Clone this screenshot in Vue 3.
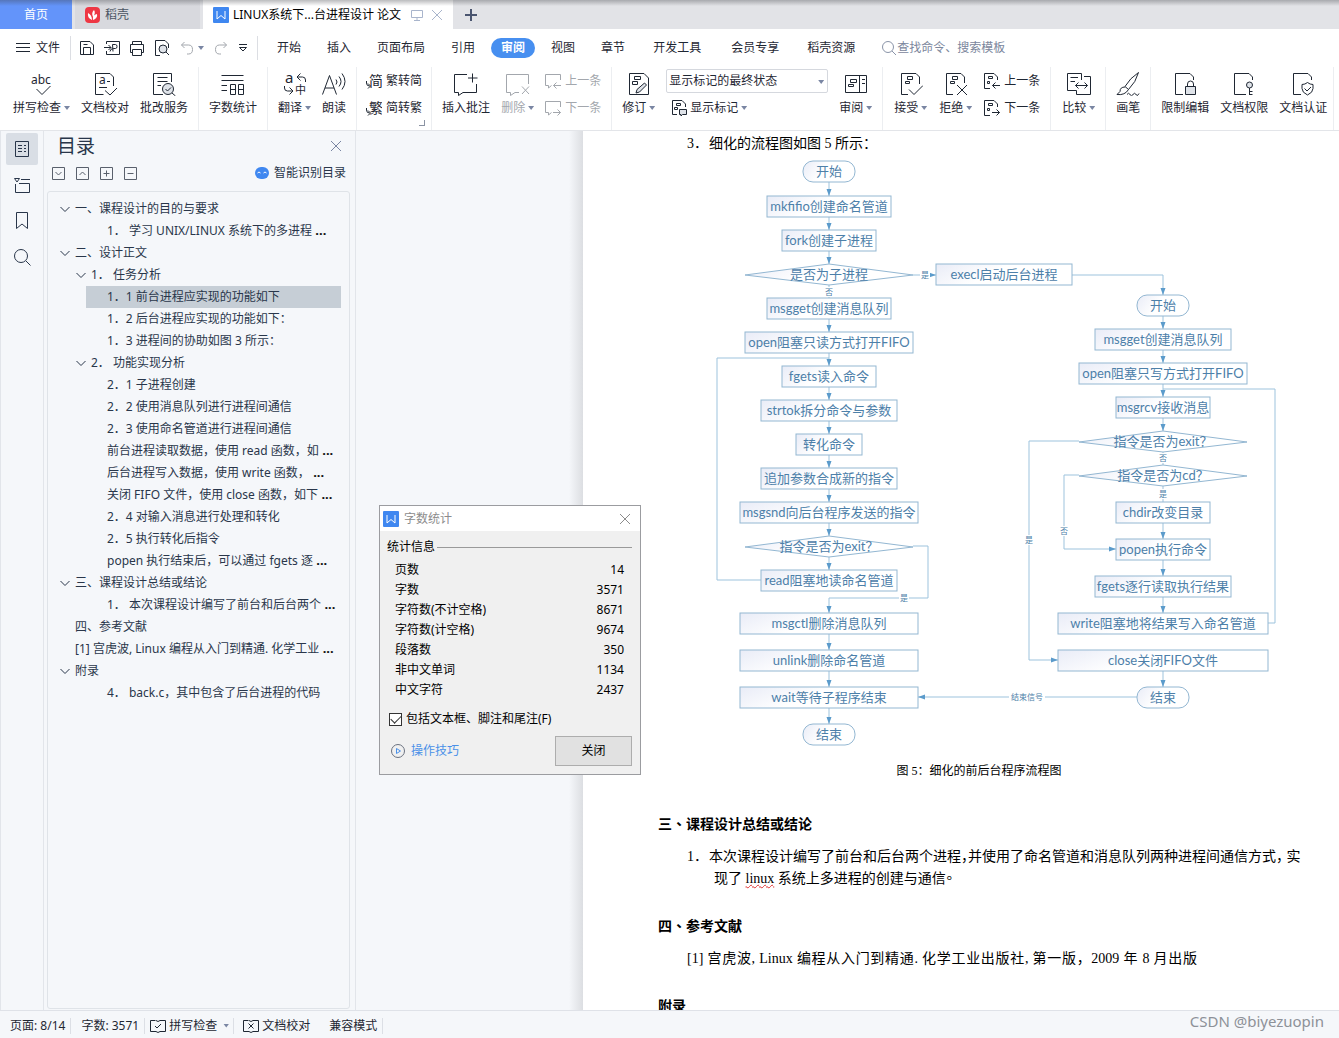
<script setup>
import { ref } from 'vue'

const menus = [
  { t: '开始' }, { t: '插入' }, { t: '页面布局' }, { t: '引用' },
  { t: '审阅', on: true }, { t: '视图' }, { t: '章节' },
  { t: '开发工具', wide: true }, { t: '会员专享', wide: true }, { t: '稻壳资源' },
]

const outline = [
  { l: 0, c: true, t: '一、课程设计的目的与要求' },
  { l: 2, t: '1． 学习 UNIX/LINUX 系统下的多进程', more: true },
  { l: 0, c: true, t: '二、设计正文' },
  { l: 1, c: true, t: '1． 任务分析' },
  { l: 2, t: '1．1 前台进程应实现的功能如下', on: true },
  { l: 2, t: '1．2 后台进程应实现的功能如下：' },
  { l: 2, t: '1．3 进程间的协助如图 3 所示：' },
  { l: 1, c: true, t: '2． 功能实现分析' },
  { l: 2, t: '2．1 子进程创建' },
  { l: 2, t: '2．2 使用消息队列进行进程间通信' },
  { l: 2, t: '2．3 使用命名管道进行进程间通信' },
  { l: 2, t: '前台进程读取数据，使用 read 函数，如', more: true },
  { l: 2, t: '后台进程写入数据，使用 write 函数，', more: true },
  { l: 2, t: '关闭 FIFO 文件，使用 close 函数，如下', more: true },
  { l: 2, t: '2．4 对输入消息进行处理和转化' },
  { l: 2, t: '2．5 执行转化后指令' },
  { l: 2, t: 'popen 执行结束后，可以通过 fgets 逐', more: true },
  { l: 0, c: true, t: '三、课程设计总结或结论' },
  { l: 2, t: '1． 本次课程设计编写了前台和后台两个', more: true },
  { l: 0, t: '四、参考文献' },
  { l: 0, t: '[1] 宫虎波, Linux 编程从入门到精通. 化学工业', more: true },
  { l: 0, c: true, t: '附录' },
  { l: 2, t: '4． back.c，其中包含了后台进程的代码' },
]

const stats = [
  ['页数', 14], ['字数', 3571], ['字符数(不计空格)', 8671], ['字符数(计空格)', 9674],
  ['段落数', 350], ['非中文单词', 1134], ['中文字符', 2437],
]
const includeNotes = ref(true)
const markup = ref('显示标记的最终状态')

// Flow chart nodes: [kind, centre x, top, width, text]; every node is 21 high
const nodes = [
  ['pill', 829, 161, 52, '开始'],
  ['box', 829, 196, 124, 'mkfifio创建命名管道'],
  ['box', 829, 230, 94, 'fork创建子进程'],
  ['rhomb', 829, 264, 168, '是否为子进程'],
  ['box', 829, 298, 124, 'msgget创建消息队列'],
  ['box', 829, 332, 168, 'open阻塞只读方式打开FIFO'],
  ['box', 829, 366, 94, 'fgets读入命令'],
  ['box', 829, 400, 136, 'strtok拆分命令与参数'],
  ['box', 829, 434, 66, '转化命令'],
  ['box', 829, 468, 136, '追加参数合成新的指令'],
  ['box', 829, 502, 178, 'msgsnd向后台程序发送的指令'],
  ['rhomb', 829, 536, 168, '指令是否为exit？'],
  ['box', 829, 570, 136, 'read阻塞地读命名管道'],
  ['box', 829, 613, 178, 'msgctl删除消息队列'],
  ['box', 829, 650, 178, 'unlink删除命名管道'],
  ['box', 829, 687, 178, 'wait等待子程序结束'],
  ['pill', 829, 724, 52, '结束'],
  ['box', 1004, 264, 136, 'execl启动后台进程'],
  ['pill', 1163, 295, 52, '开始'],
  ['box', 1163, 329, 136, 'msgget创建消息队列'],
  ['box', 1163, 363, 168, 'open阻塞只写方式打开FIFO'],
  ['box', 1163, 397, 94, 'msgrcv接收消息'],
  ['rhomb', 1163, 431, 168, '指令是否为exit？'],
  ['rhomb', 1163, 465, 168, '指令是否为cd？'],
  ['box', 1163, 502, 94, 'chdir改变目录'],
  ['box', 1163, 539, 94, 'popen执行命令'],
  ['box', 1163, 576, 136, 'fgets逐行读取执行结果'],
  ['box', 1163, 613, 210, 'write阻塞地将结果写入命名管道'],
  ['box', 1163, 650, 210, 'close关闭FIFO文件'],
  ['pill', 1163, 687, 52, '结束'],
].map(([kind, x, y, w, t]) => ({ kind, x, y, w, t }))

const arrows = [
  'M829 182V196', 'M829 217V230', 'M829 251V264', 'M829 319V332', 'M829 353V366', 'M829 387V400',
  'M829 421V434', 'M829 455V468', 'M829 489V502', 'M829 523V536', 'M829 557V570',
  'M913 546H928V598H829V613', 'M829 634V650', 'M829 671V687', 'M829 708V724',
  'M913 275H936', 'M1071 275H1163V295', 'M1163 316V329', 'M1163 350V363', 'M1163 384V397',
  'M1163 418V431', 'M1163 523V539', 'M1163 560V576', 'M1163 597V613', 'M1163 671V687',
  'M1079 475H1064V549H1116', 'M1079 441H1029V660H1058', 'M1137 697H918',
]
const lines = [
  'M829 285V298', 'M761 580H717V358H829', 'M1268 623H1275V389H1163', 'M1163 452V465', 'M1163 486V502',
]
const tags = [
  [925, 275, '是', 10], [829, 292, '否', 10], [904, 598, '是', 10], [1163, 458, '否', 10],
  [1163, 494, '是', 10], [1064, 531, '否', 10], [1029, 540, '是', 10], [1027, 697, '结束信号', 36],
].map(([x, y, t, w]) => ({ x, y, t, w }))
</script>

<template>
  <div class="app">
    <svg class="defs" width="0" height="0" aria-hidden="true">
      <symbol id="i-spell" viewBox="0 0 24 24"><text x="1" y="12" font-size="12">abc</text><path d="M6.500 17l5.500 5.500 8.500-8.500" /></symbol>
      <symbol id="i-proof" viewBox="0 0 24 24"><path d="M10.500 22.500H2.500V1.500H17L20.500 5V14M6 15.500H14M12 18.500l5 4.500 7-7M14 9.500h3" /><text x="6" y="12" font-size="12">a</text></symbol>
      <symbol id="i-fix" viewBox="0 0 24 24"><path d="M11 22.500H1.500V1.500H19.500V10M5.500 5.500H15.500M5.500 9.500H15.500M5.500 13.500H9" /><circle cx="16" cy="17" r="5.500" class="tint" /><path d="M20 21l3.500 3M13.500 17l2 2 3.500-3.500" /></symbol>
      <symbol id="i-count" viewBox="0 0 24 24"><path d="M.5 3.500H22.500M.5 8.500H22.500M.5 13.500H6M.5 18.500H6M9.500 12.500h5v10h-5zM9.500 17.500h5M17.500 12.500h5v10h-5zM17.500 17.500h5" /></symbol>
      <symbol id="i-trans" viewBox="0 0 24 24"><text x="2" y="11" font-size="15">a</text><text x="12" y="22" font-size="11">中</text><path d="M22.500 10V8q0-3-3-3H14M17.500 1.500L14 5l3.500 3.500M1.500 14v2q0 3 3 3H10M6.500 15.500l3.500 3.500-3.500 3.500" /></symbol>
      <symbol id="i-read" viewBox="0 0 24 24"><path d="M.5 22.500L7.500 3.500 14.500 22.500M3 16H12M14 7.500q2 2.500 0 5M17 4.500q4 5 0 10M20 1.500q6 8 0 16" /></symbol>
      <symbol id="i-simp" viewBox="0 0 16 16"><text x="3" y="13" font-size="14">简</text><path d="M.5 8v2q0 3 3 3M2 10.500L4.500 13 2 15.500" /></symbol>
      <symbol id="i-trad" viewBox="0 0 16 16"><text x="3" y="13" font-size="14">繁</text><path d="M.5 8v2q0 3 3 3M2 10.500L4.500 13 2 15.500" /></symbol>
      <symbol id="i-note" viewBox="0 0 24 24"><path d="M13 2.500H.5V20.500H4.500V23.500L9 20.500H22.500V12M18.500 1.500v9M14 6h9.500" /></symbol>
      <symbol id="i-del" viewBox="0 0 24 24"><path d="M22.500 12V2.500H.5V20.500H4.500V23.500L9 20.500H13M16 14.500l7 7.500M23 14.500l-7 7.500" /></symbol>
      <symbol id="i-cprev" viewBox="0 0 16 16"><path d="M15.500 7V1.500H.5V12.500H3.500V15L6.500 12.500M16 12.500H8.500M11.500 9.500l-3 3 3 3" /></symbol>
      <symbol id="i-cnext" viewBox="0 0 16 16"><path d="M15.500 7V1.500H.5V12.500H3.500V15L6.500 12.500M8 12.500H15.500M12.500 9.500l3 3-3 3" /></symbol>
      <symbol id="i-revise" viewBox="0 0 24 24"><path d="M2.500 1.500H17L21.500 6V22.500H2.500zM7.500 4.500h6v3h-6zM5.500 9.500h5v3h-5z" /><path d="M17.500 11l2 2-7 7-3.500 1 1-3.500z" class="tint" /></symbol>
      <symbol id="i-mark" viewBox="0 0 16 16"><path d="M6 14.500H1.500V.5H11L14.500 4V7M5.500 3.500h4v2h-4zM3.500 7.500h3v2h-3z" /><path d="M8.500 9.500h7v5h-4l-1.500 1.500V14.500H8.500z" class="tint" /></symbol>
      <symbol id="i-review" viewBox="0 0 24 24"><path d="M1.500 3.500H22.500V20.500H1.500zM15.500 3.500v17M18 7.500h3M18 11.500h3M6.500 7.500h6v3h-6zM4.500 12.500h5v2h-5z" /></symbol>
      <symbol id="i-accept" viewBox="0 0 24 24"><path d="M9 22.500H2.500V1.500H17L20.500 5V12M8.500 4.500h5v3h-5zM6.500 9.500h4v2h-4zM10 17.500l5 5 9-9" /></symbol>
      <symbol id="i-reject" viewBox="0 0 24 24"><path d="M9 22.500H2.500V1.500H17L20.500 5V11M8.500 4.500h5v3h-5zM6.500 9.500h4v2h-4zM13 13l10 10M23 13l-10 10" /></symbol>
      <symbol id="i-rprev" viewBox="0 0 16 16"><path d="M6 15.500H.5V.5H10L13.500 4V7M4.500 3.500h4v2h-4zM3.500 8.500h2v2h-2zM16 12.500H8.500M11.500 9.500l-3 3 3 3" /></symbol>
      <symbol id="i-rnext" viewBox="0 0 16 16"><path d="M6 15.500H.5V.5H10L13.500 4V7M4.500 3.500h4v2h-4zM3.500 8.500h2v2h-2zM8 12.500H15.500M12.500 9.500l3 3-3 3" /></symbol>
      <symbol id="i-compare" viewBox="0 0 24 24"><path d="M14.500 8V1.500H.5V18.500H9.500V22.500H23.500V4.500H17M3.500 5.500H11M3.500 9.500H8M8.500 13.500H20.500M11.500 10.500l-3 3 3 3M17.500 10.500l3 3-3 3" /></symbol>
      <symbol id="i-brush" viewBox="0 0 24 24"><path d="M22.500.5Q14 6 9 14.500l3.500 3Q20 10 22.500.5zM9 15q-5 0-5 4.500L1 22.500q8 1 11.500-5M11 22.500q1.500-2.500 3 0t3 0 3 0 3-1" /></symbol>
      <symbol id="i-lock" viewBox="0 0 24 24"><path d="M10 22.500H2.500V1.500H17L20.500 5V8M14.500 15v-3a3 3 0 0 1 6 0v3" /><path d="M12.500 14.500h10v8h-10z" class="tint" /></symbol>
      <symbol id="i-key" viewBox="0 0 24 24"><path d="M14 22.500H2.500V1.500H17L20.500 5V8M17.500 16v7M17.500 19.500h3M17.500 22.500h3" /><circle cx="17.500" cy="13" r="3" class="tint" /></symbol>
      <symbol id="i-cert" viewBox="0 0 24 24"><path d="M10 22.500H2.500V1.500H17L20.500 5V8M16.500 10.500q2.500 2 5.500 2v4q0 4-5.500 6.500Q11 20.500 11 16.500v-4q3 0 5.500-2zM13.500 16.500l2.500 2.500 4-4" /></symbol>
      <symbol id="i-save" viewBox="0 0 16 16"><path d="M1.500 1.500H11L14.500 5V14.500H1.500zM4.500 14.500V7.500H11.500V14.500M4.500 4.500h4" /></symbol>
      <symbol id="i-export" viewBox="0 0 16 16"><path d="M2.500 4V1.500H15.500V14.500H2.500V11M0 7.500H7M4.500 5L7 7.500 4.500 10M9 11.500L8.500 4.500h3q1.500 0 1.500 2t-1.500 2H10q-4 0-4 3" /></symbol>
      <symbol id="i-print" viewBox="0 0 16 16"><path d="M3.500 4.500V1.500H12.500V4.500M3.500 12.500H1.500V4.500H14.500V12.500H12.500M3.500 9.500H12.500V15.500H3.500z" /></symbol>
      <symbol id="i-preview" viewBox="0 0 16 16"><path d="M6 15.500H1.500V.5H11L14.500 4V8M12 12l3 3" /><circle cx="9" cy="9" r="4" class="tint" /></symbol>
      <symbol id="i-undo" viewBox="0 0 16 16"><path d="M5.500 2L2.500 5 5.500 8M2.500 5H9.500q4 0 4 4.500T9.500 14H8" /></symbol>
      <symbol id="i-redo" viewBox="0 0 16 16"><path d="M10.500 2L13.500 5 10.500 8M13.500 5H6.500q-4 0-4 4.500T6.500 14H8" /></symbol>
      <symbol id="i-find" viewBox="0 0 16 16"><circle cx="7" cy="7" r="5.500" /><path d="M11 11l4 4" /></symbol>
      <symbol id="i-x" viewBox="0 0 12 12"><path d="M1 1l10 10M11 1L1 11" /></symbol>
      <symbol id="i-v" viewBox="0 0 12 12"><path d="M1.500 4l4.500 4.500L10.500 4" /></symbol>
      <symbol id="i-w" viewBox="0 0 16 16"><rect width="16" height="16" rx="1" class="blue" /><path d="M4 4v8l4-3.500L12 12V4" stroke="#fff" /></symbol>
      <symbol id="i-bspell" viewBox="0 0 16 14"><path d="M5.500 1.500H.5V12.500H6L8 13.500 10 12.500H15.500V1.500H10L8 2.500 6 1.500M5 7l2 2 4-4" /></symbol>
      <symbol id="i-bproof" viewBox="0 0 16 14"><path d="M5.500 1.500H.5V12.500H6L8 13.500 10 12.500H15.500V1.500H10L8 2.500 6 1.500M5.500 4.500l5 5M10.500 4.500l-5 5" /></symbol>
    </svg>

    <header class="tabs">
      <button class="tab home">首页</button>
      <button class="tab docer">
        <svg width="16" height="16" viewBox="0 0 16 16"><rect width="15" height="16" rx="4" fill="#ee3744" stroke="none" /><path d="M7 13Q2 11 3 6q4 2 4 7zM8 10Q6 6 9 3q2 3-1 7zM8 13q-1-5 4-6 1 4-4 6z" fill="#fff" stroke="none" /></svg>
        稻壳
      </button>
      <div class="tab current">
        <svg width="16" height="16"><use href="#i-w" /></svg>
        <span>LINUX系统下...台进程设计 论文</span>
        <svg class="faint" width="12" height="12" viewBox="0 0 12 12"><path d="M.5 1.500H11.500V8.500H.5zM6 8.500V11M3 11.500H9" /></svg>
        <button aria-label="关闭标签" class="bare faint"><svg width="12" height="12"><use href="#i-x" /></svg></button>
      </div>
      <button class="bare add" aria-label="新建"><svg width="12" height="12" viewBox="0 0 12 12"><path d="M6 0v12M0 6h12" /></svg></button>
    </header>

    <nav class="menu">
      <button class="bare file"><svg width="14" height="12" viewBox="0 0 14 12"><path d="M0 1.500h14M0 5.500h14M0 9.500h14" /></svg>文件</button>
      <div class="quick">
        <button class="bare" aria-label="保存"><svg width="16" height="16"><use href="#i-save" /></svg></button>
        <button class="bare" aria-label="输出PDF"><svg width="16" height="16"><use href="#i-export" /></svg></button>
        <button class="bare" aria-label="打印"><svg width="16" height="16"><use href="#i-print" /></svg></button>
        <button class="bare" aria-label="预览"><svg width="16" height="16"><use href="#i-preview" /></svg></button>
        <button class="bare off" aria-label="撤销"><svg width="16" height="16"><use href="#i-undo" /></svg><i class="caret"></i></button>
        <button class="bare off" aria-label="恢复"><svg width="16" height="16"><use href="#i-redo" /></svg></button>
        <button class="bare" aria-label="自定义"><svg width="10" height="10" viewBox="0 0 10 10"><path d="M1 1.500h8M1.500 4.500h7L5 8z" /></svg></button>
      </div>
      <button v-for="m in menus" :key="m.t" class="bare item" :class="{ on: m.on, wide: m.wide }">{{ m.t }}</button>
      <label class="search"><svg width="16" height="16"><use href="#i-find" /></svg><input type="text" placeholder="查找命令、搜索模板" aria-label="查找命令、搜索模板" /></label>
    </nav>

    <section class="ribbon">
      <div class="group first">
        <button class="bare big"><svg width="24" height="24"><use href="#i-spell" /></svg><span>拼写检查<i class="caret"></i></span></button>
        <button class="bare big"><svg width="24" height="24"><use href="#i-proof" /></svg><span>文档校对</span></button>
        <button class="bare big"><svg width="24" height="24"><use href="#i-fix" /></svg><span>批改服务</span></button>
      </div>
      <div class="group"><button class="bare big"><svg width="24" height="24"><use href="#i-count" /></svg><span>字数统计</span></button></div>
      <div class="group">
        <button class="bare big"><svg width="24" height="24"><use href="#i-trans" /></svg><span>翻译<i class="caret"></i></span></button>
        <button class="bare big"><svg width="24" height="24"><use href="#i-read" /></svg><span>朗读</span></button>
      </div>
      <div class="group corner">
        <div class="stack">
          <button class="bare small"><svg width="16" height="16"><use href="#i-simp" /></svg>繁转简</button>
          <button class="bare small"><svg width="16" height="16"><use href="#i-trad" /></svg>简转繁</button>
        </div>
      </div>
      <div class="group">
        <button class="bare big"><svg width="24" height="24"><use href="#i-note" /></svg><span>插入批注</span></button>
        <button class="bare big off"><svg width="24" height="24"><use href="#i-del" /></svg><span>删除<i class="caret"></i></span></button>
        <div class="stack off">
          <button class="bare small"><svg width="16" height="16"><use href="#i-cprev" /></svg>上一条</button>
          <button class="bare small"><svg width="16" height="16"><use href="#i-cnext" /></svg>下一条</button>
        </div>
      </div>
      <div class="group">
        <button class="bare big"><svg width="24" height="24"><use href="#i-revise" /></svg><span>修订<i class="caret"></i></span></button>
        <div class="stack">
          <label class="pick"><select v-model="markup" aria-label="标记显示方式"><option>显示标记的最终状态</option><option>最终状态</option></select><i class="caret"></i></label>
          <button class="bare small inset"><svg width="16" height="16"><use href="#i-mark" /></svg><span>显示标记<i class="caret"></i></span></button>
        </div>
        <button class="bare big"><svg width="24" height="24"><use href="#i-review" /></svg><span>审阅<i class="caret"></i></span></button>
      </div>
      <div class="group roomy">
        <button class="bare big"><svg width="24" height="24"><use href="#i-accept" /></svg><span>接受<i class="caret"></i></span></button>
        <button class="bare big"><svg width="24" height="24"><use href="#i-reject" /></svg><span>拒绝<i class="caret"></i></span></button>
        <div class="stack">
          <button class="bare small"><svg width="16" height="16"><use href="#i-rprev" /></svg>上一条</button>
          <button class="bare small"><svg width="16" height="16"><use href="#i-rnext" /></svg>下一条</button>
        </div>
      </div>
      <div class="group roomy"><button class="bare big"><svg width="24" height="24"><use href="#i-compare" /></svg><span>比较<i class="caret"></i></span></button></div>
      <div class="group"><button class="bare big"><svg width="24" height="24"><use href="#i-brush" /></svg><span>画笔</span></button></div>
      <div class="group last">
        <button class="bare big"><svg width="24" height="24"><use href="#i-lock" /></svg><span>限制编辑</span></button>
        <button class="bare big"><svg width="24" height="24"><use href="#i-key" /></svg><span>文档权限</span></button>
        <button class="bare big"><svg width="24" height="24"><use href="#i-cert" /></svg><span>文档认证</span></button>
      </div>
    </section>

    <main class="work">
      <aside class="rail">
        <button class="bare on" aria-label="目录"><svg width="16" height="16" viewBox="0 0 16 16"><path d="M1.500.5H14.500V15.500H1.500zM4 4.500h4M4 7.500h4M4 10.500h4M10 4.500h2M10 7.500h2M10 10.500h2" /></svg></button>
        <button class="bare" aria-label="章节"><svg width="16" height="16" viewBox="0 0 16 16"><path d="M.5 1.500h5L3 5zM7 2.500H16M1.500 7V15.500H15.500V6.500H5" /></svg></button>
        <button class="bare" aria-label="书签"><svg width="16" height="18" viewBox="0 0 16 18"><path d="M2.500.5H13.500V16.500L8 12 2.500 16.500z" /></svg></button>
        <button class="bare" aria-label="查找"><svg width="17" height="17" viewBox="0 0 17 17"><circle cx="7" cy="7" r="6.500" /><path d="M12 12l4.500 4.500" /></svg></button>
      </aside>

      <aside class="outline">
        <div class="title"><h2>目录</h2><button class="bare" aria-label="关闭目录"><svg width="12" height="12"><use href="#i-x" /></svg></button></div>
        <div class="tools">
          <button class="bare" aria-label="展开"><svg width="13" height="13" viewBox="0 0 13 13"><path d="M.5.5h12v12H.5zM3.500 5l3 3 3-3" /></svg></button>
          <button class="bare" aria-label="收起"><svg width="13" height="13" viewBox="0 0 13 13"><path d="M.5.5h12v12H.5zM3.500 8l3-3 3 3" /></svg></button>
          <button class="bare" aria-label="增加级别"><svg width="13" height="13" viewBox="0 0 13 13"><path d="M.5.5h12v12H.5zM3.500 6.500h6M6.500 3.500v6" /></svg></button>
          <button class="bare" aria-label="减少级别"><svg width="13" height="13" viewBox="0 0 13 13"><path d="M.5.5h12v12H.5zM3.500 6.500h6" /></svg></button>
          <a href="#" class="smart"><svg width="14" height="12" viewBox="0 0 14 12"><rect width="14" height="12" rx="6" class="blue" /><path d="M2.500 6q1.500-2 3 0M8.500 6q1.500-2 3 0" stroke="#fff" /></svg>智能识别目录</a>
        </div>
        <ul class="tree">
          <li v-for="(o, i) in outline" :key="i" :class="['lv' + o.l, { on: o.on }]">
            <span class="tw"><svg v-if="o.c" width="12" height="12"><use href="#i-v" /></svg></span>
            <span>{{ o.t }}<b v-if="o.more"> ...</b></span>
          </li>
        </ul>
      </aside>

      <div class="canvas">
        <article class="page">
          <p class="item-line"><span class="num">3．</span>细化的流程图如图 5 所示：</p>
          <figure>
            <svg class="chart" width="590" height="594" viewBox="700 157 590 594">
              <defs>
                <linearGradient id="g" x1="0" y1="0" x2="1" y2="0.3"><stop offset="0" stop-color="#e9ecf7" /><stop offset="0.5" stop-color="#fff" /></linearGradient>
                <marker id="a" markerUnits="userSpaceOnUse" markerWidth="8" markerHeight="6" refX="7" refY="3" orient="auto"><path d="M0 0.500L7 3L0 5.500z" fill="#5b9bcb" stroke="none" /></marker>
              </defs>
              <path v-for="d in lines" :key="d" :d="d" class="wire" />
              <path v-for="d in arrows" :key="d" :d="d" class="wire" marker-end="url(#a)" />
              <g v-for="(n, i) in nodes" :key="i">
                <path v-if="n.kind === 'rhomb'" class="shape" :d="`M${n.x - n.w / 2} ${n.y + 11}L${n.x} ${n.y}L${n.x + n.w / 2} ${n.y + 11}L${n.x} ${n.y + 21}z`" />
                <rect v-else class="shape" :x="n.x - n.w / 2" :y="n.y" :width="n.w" height="21" :rx="n.kind === 'pill' ? 10 : 0" />
                <text :x="n.x" :y="n.y + 15">{{ n.t }}</text>
              </g>
              <g v-for="(t, i) in tags" :key="'t' + i">
                <rect :x="t.x - t.w / 2" :y="t.y - 5" :width="t.w" height="10" class="gap" />
                <text class="tag" :x="t.x" :y="t.y + 3">{{ t.t }}</text>
              </g>
            </svg>
            <figcaption>图 5：细化的前后台程序流程图</figcaption>
          </figure>
          <h3>三<span class="tc">、</span>课程设计总结或结论</h3>
          <p class="body"><span class="num">1．</span>本次课程设计编写了前台和后台两个进程，并使用了命名管道和消息队列两种进程间通信方式， 实<br /><span class="hang">现了 <u>linux</u> 系统上多进程的创建与通信<span class="tc">。</span></span></p>
          <h3>四<span class="tc">、</span>参考文献</h3>
          <p class="cite">[1] 宫虎波, Linux 编程从入门到精通. 化学工业出版社, 第一版，2009 年 8 月出版</p>
          <h3>附录</h3>
        </article>
      </div>
    </main>

    <footer class="status">
      <span class="cell">页面: 8/14</span>
      <span class="cell">字数: 3571</span>
      <button class="bare cell tight"><svg width="16" height="14"><use href="#i-bspell" /></svg>拼写检查<i class="caret"></i></button>
      <button class="bare cell plain"><svg width="16" height="14"><use href="#i-bproof" /></svg>文档校对</button>
      <span class="cell">兼容模式</span>
      <span class="mark">CSDN @biyezuopin</span>
    </footer>

    <section class="dialog" role="dialog" aria-label="字数统计">
      <div class="bar"><svg width="16" height="16"><use href="#i-w" /></svg><span>字数统计</span><button class="bare" aria-label="关闭对话框"><svg width="12" height="12"><use href="#i-x" /></svg></button></div>
      <div class="inner">
        <div class="legend">统计信息</div>
        <table><tbody><tr v-for="s in stats" :key="s[0]"><th scope="row">{{ s[0] }}</th><td>{{ s[1] }}</td></tr></tbody></table>
        <label class="check"><input v-model="includeNotes" type="checkbox" />包括文本框、脚注和尾注(F)</label>
        <div class="foot">
          <a href="#"><svg width="14" height="14" viewBox="0 0 14 14"><circle cx="7" cy="7" r="6.500" stroke="#6b7280" /><path d="M5.500 4.500v5l4-2.500z" /></svg>操作技巧</a>
          <button class="close">关闭</button>
        </div>
      </div>
    </section>
  </div>
</template>

<style>
body { margin: 0; }
</style>

<style scoped>
.app { position: relative; display: flex; flex-direction: column; height: 100vh; overflow: hidden; background: #fff; color: #1f2733; font: 12px/16px "Noto Sans", "Noto Sans CJK SC", sans-serif; }
.app * { box-sizing: border-box; }
svg { display: block; flex: none; fill: none; stroke: currentColor; overflow: visible; }
.defs { display: none; }
svg text { fill: currentColor; stroke: none; }
.tint { fill: #dfe3e9; }
.blue { fill: #3f87f0; stroke: none; }
button { font: inherit; color: inherit; white-space: nowrap; }
.bare { display: flex; align-items: center; padding: 0; border: 0; background: none; }
.off { color: #a3a7ad; }
.faint { color: #a9b5cc; }
.caret { display: inline-block; width: 6px; height: 4px; margin-left: 3px; vertical-align: 2px; background: #7a86a3; clip-path: polygon(0 0, 100% 0, 50% 100%); }

.tabs { display: flex; flex: none; height: 29px; background: linear-gradient(rgba(60, 62, 68, .35), rgba(60, 62, 68, 0) 6px), #e2e3e7; }
.tab { display: flex; align-items: center; border: 0; padding: 0; }
.home { width: 72px; justify-content: center; color: #fff; background: linear-gradient(rgba(60, 62, 68, .35), rgba(60, 62, 68, 0) 6px), #6394fa; }
.docer { width: 125px; margin: 0 3px; padding-left: 10px; gap: 4px; color: #4b5563; background: linear-gradient(rgba(60, 62, 68, .35), rgba(60, 62, 68, 0) 6px), #d8d9de; }
.current { width: 250px; padding-left: 10px; gap: 4px; color: #000; background: linear-gradient(rgba(60, 62, 68, .35), rgba(60, 62, 68, 0) 6px), #fff; }
.current span { width: 174px; white-space: nowrap; }
.current button { margin-left: 4px; }
.add { margin-left: 12px; color: #4a5570; }
.add svg { stroke-width: 2; }

.menu { display: flex; flex: none; align-items: center; height: 38px; }
.file { gap: 6px; height: 24px; padding: 0 10px 0 16px; border-right: 1px solid #dcdee3; }
.quick { display: flex; align-items: center; gap: 9px; height: 24px; padding: 0 9px 0 8px; margin-right: 4px; border-right: 1px solid #dcdee3; }
.quick svg { margin-right: 0; }
.item { height: 20px; padding: 0 10px; margin: 0 3px; border-radius: 10px; }
.quick + .item { margin-left: 5px; }
.item.wide { margin: 0 5px; }
.item.on { color: #fff; background: #478ff0; font-weight: bold; }
.search { display: flex; align-items: center; margin-left: 13px; color: #8a94a8; }
.search input { width: 140px; padding: 0; border: 0; outline: 0; background: none; font: inherit; }
.search input::placeholder { color: #7b869c; opacity: 1; }

.ribbon { display: flex; flex: none; height: 64px; border-bottom: 1px solid #e3e5e9; }
.group { position: relative; display: flex; flex: none; gap: 11px; padding: 0 10px; border-right: 1px solid #eceef1; }
.group.first { padding-left: 13px; }
.group.corner { padding: 0 9px; }
.group.roomy { gap: 12px; padding: 0 10px 0 11px; }
.group.last { padding-right: 6px; }
.corner::after { content: ""; position: absolute; right: 6px; bottom: 4px; width: 5px; height: 5px; border: solid #8b93a3; border-width: 0 1px 1px 0; }
.big { flex-direction: column; gap: 4px; height: 49px; padding-top: 5px; }
.stack { display: flex; flex-direction: column; gap: 3px; padding-top: 2px; }
.small { gap: 4px; height: 24px; }
.small.inset { padding-left: 5px; gap: 3px; }
.pick { position: relative; display: block; }
.pick select { display: block; width: 162px; height: 24px; padding: 0 2px; border: 1px solid #d5d8de; border-radius: 2px; appearance: none; background: #fff; color: inherit; font: inherit; }
.pick .caret { position: absolute; right: 4px; top: 11px; }

.work { display: flex; flex: 1; min-height: 0; background: #f5f7fa; color: #29364a; }
.rail { display: flex; flex: none; flex-direction: column; align-items: center; gap: 4px; width: 44px; padding-top: 2px; border: solid #e2e5ea; border-width: 0 1px; }
.rail button { justify-content: center; width: 32px; height: 32px; border-radius: 2px; }
.rail button.on { background: #d9dee5; }
.outline { display: flex; flex: none; flex-direction: column; width: 312px; padding: 0 5px 1px 3px; border-right: 1px solid #e2e5ea; }
.title { display: flex; align-items: center; justify-content: space-between; height: 30px; padding: 0 8px 0 10px; }
.title h2 { margin: 0; font-size: 19px; line-height: 28px; font-weight: normal; }
.title button { color: #7a86a3; }
.tools { display: flex; align-items: center; gap: 11px; height: 24px; padding: 0 4px 0 5px; margin-bottom: 6px; color: #59606c; }
.smart { display: flex; align-items: center; gap: 5px; margin-left: auto; color: #29364a; text-decoration: none; }
.tree { flex: 1; min-height: 0; margin: 0; padding: 6px 8px 0; border: 1px solid #dfe3e8; border-radius: 3px; list-style: none; overflow: hidden; }
.tree li { display: flex; align-items: center; height: 22px; white-space: nowrap; }
.tree .tw { flex: none; width: 16px; }
.lv0 { margin-left: 3px; }
.lv1 { margin-left: 19px; }
.lv2 { margin-left: 30px; padding-left: 5px; }
.lv2.on { background: #c6ced6; }
.tree b { font-size: 13px; line-height: 0; color: #111; }

.canvas { display: flex; flex: 1; min-width: 0; padding-left: 213px; }
.canvas::before { content: ""; flex: none; width: 14px; background: linear-gradient(90deg, #f5f7fa, #dcdee2); }
.page { flex: 1; min-width: 0; padding-left: 75px; overflow: hidden; background: #fff; color: #000; font: 14px/22px "Liberation Serif", "Noto Sans CJK SC", serif; }
.page p, .page h3, figure { margin: 0; }
.item-line { padding: 2px 0 0 29px; white-space: nowrap; }
.num { display: inline-block; width: 22px; }
figure { width: 632px; padding: 2px 0 6px; }
.chart { margin-left: 42px; font: 13px Lato, "Noto Sans CJK SC", sans-serif; color: #4d80a9; }
.chart text { text-anchor: middle; }
.chart .tag { font-size: 8px; }
.shape { fill: url(#g); stroke: #93b7d2; }
.wire { stroke: #9dc3dd; }
.gap { fill: #fff; stroke: none; }
figcaption { padding-left: 10px; margin-top: 9px; font-size: 12px; text-align: center; }
.page h3 { margin-top: 26px; font-size: 14px; }
.tc { font-family: "Noto Sans CJK TC"; line-height: 0; }
.page .body { padding: 10px 0 0 29px; white-space: nowrap; font-feature-settings: "halt"; }
.page .cite { width: 539px; padding: 10px 0 0 29px; text-align: justify; text-align-last: justify; }
.hang { padding-left: 27px; }
u { text-decoration: underline wavy #e03030 1px; text-underline-offset: 1px; text-decoration-skip-ink: none; }

.status { display: flex; flex: none; align-items: center; height: 28px; padding-top: 2px; border-top: 1px solid #dfe2e8; background: #f5f7fa; }
.cell { display: flex; align-items: center; gap: 3px; height: 16px; padding: 0 5px 0 10px; border-right: 1px solid #dcdfe5; }
.cell.tight { padding: 0 4px 0 5px; }
.cell.plain { padding: 0 9px; border: 0; }
.mark { align-self: flex-start; margin-left: auto; padding-right: 15px; color: #8d9198; font-size: 15px; line-height: 16px; }

.dialog { position: absolute; left: 379px; top: 505px; width: 262px; border: 1px solid #9b9ca0; background: #f0f0f0; color: #000; }
.bar { display: flex; align-items: center; gap: 5px; height: 25px; padding: 0 9px 0 3px; background: #fff; color: #8c8c8c; }
.bar button { margin-left: auto; }
.inner { padding: 8px 8px 8px 7px; }
.legend { display: flex; align-items: center; gap: 2px; }
.legend::after { content: ""; flex: 1; height: 1px; background: #9a9a9a; }
table { width: 100%; margin-top: 5px; border-spacing: 0; }
th, td { height: 20px; padding: 0 8px; font-weight: normal; text-align: left; }
td { text-align: right; }
.check { display: flex; align-items: center; gap: 4px; margin: 11px 0 0 2px; }
.check input { position: relative; width: 13px; height: 13px; margin: 0; border: 1px solid #333; background: #fff; appearance: none; }
.check input:checked::after { content: ""; position: absolute; left: 1px; top: 1px; width: 9px; height: 5px; border: solid #333; border-width: 0 0 1px 1px; transform: rotate(-45deg); }
.foot { display: flex; align-items: center; justify-content: space-between; margin-top: 9px; padding-left: 4px; }
.foot a { display: flex; align-items: center; gap: 6px; color: #4a90e8; text-decoration: none; }
.close { width: 77px; height: 30px; padding: 0; border: 1px solid #adadad; background: #e1e1e1; }
</style>
